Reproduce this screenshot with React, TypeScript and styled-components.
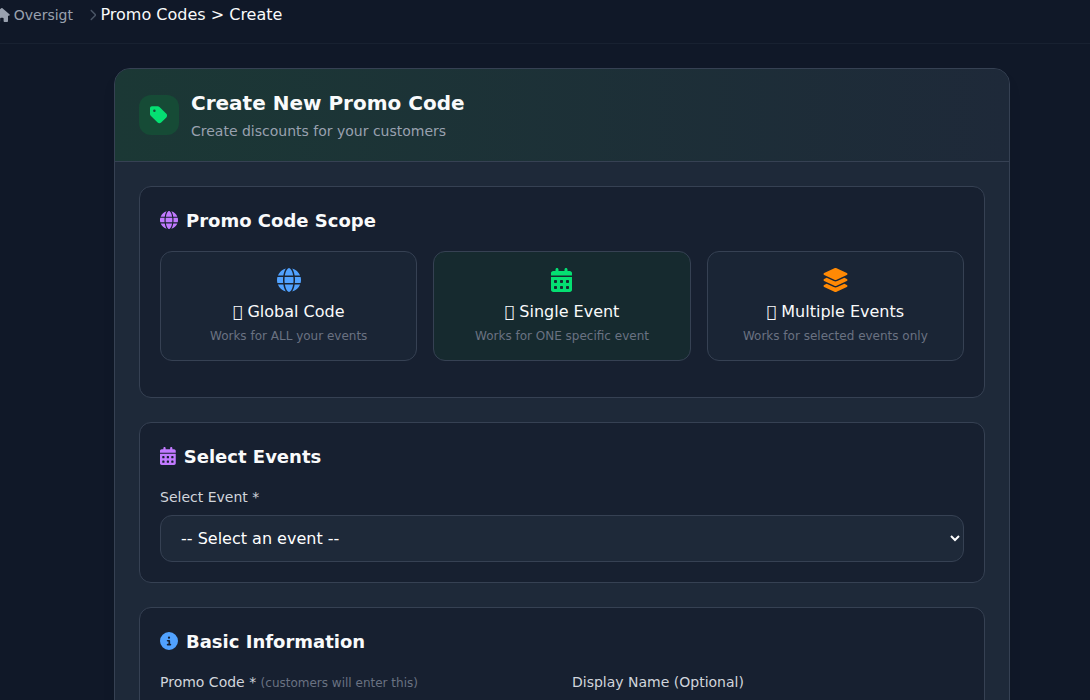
import React from "react";
import styled, { createGlobalStyle } from "styled-components";
import {
  FaCalendarDays,
  FaChevronRight,
  FaCircleInfo,
  FaGlobe,
  FaHouse,
  FaLayerGroup,
  FaTag,
} from "react-icons/fa6";

const GlobalStyle = createGlobalStyle`
  *, *::before, *::after { box-sizing: border-box; }
  body {
    margin: 0;
    background: #101828;
    color: #f9fafb;
    font-family: "DejaVu Sans", sans-serif;
    font-size: 16px;
    line-height: 24px;
    overflow-x: hidden;
  }
  h1, h2, p, fieldset { margin: 0; padding: 0; border: 0; }

  /* Icons share one height; their width follows the shape of the drawing. */
  svg { display: block; flex-shrink: 0; height: 1em; }
  svg[viewBox="0 0 320 512"] { width: 0.625em; }
  svg[viewBox="0 0 448 512"] { width: 0.875em; }
  svg[viewBox="0 0 576 512"] { width: 1.125em; }
`;

const Page = styled.div`
  min-height: 100vh;
`;

const TopBar = styled.header`
  height: 44px;
  padding-top: 3px;
  border-bottom: 1px solid #182131;
  border-top-left-radius: 8px;
`;

const Breadcrumb = styled.nav`
  display: flex;
  align-items: center;
  gap: 4px;
  margin-left: -6px;
`;

const CrumbLink = styled.a`
  display: flex;
  align-items: center;
  gap: 4px;
  margin-right: 12px;
  color: #99a1af;
  font-size: 14px;
  text-decoration: none;
`;

const CrumbDivider = styled(FaChevronRight)`
  color: #4a5565;
  font-size: 12px;
`;

const Main = styled.main`
  padding: 24px 24px 24px 58px;
`;

const Card = styled.section`
  max-width: 896px;
  margin: 0 auto;
  overflow: hidden;
  background: #1e2939;
  border: 1px solid #364153;
  border-radius: 16px;
  box-shadow: 0 10px 15px -3px rgba(0, 0, 0, 0.1);
`;

const CardHeader = styled.div`
  display: flex;
  align-items: center;
  gap: 12px;
  padding: 20px 24px;
  border-bottom: 1px solid #364153;
  background: linear-gradient(90deg, #1b3835 0%, #1e2939 100%);
`;

const IconTile = styled.div`
  display: grid;
  place-items: center;
  width: 40px;
  height: 40px;
  border-radius: 12px;
  background: #164b36;
  color: #05df72;
  font-size: 20px;
`;

const Title = styled.h1`
  font-size: 20px;
  line-height: 28px;
`;

const Subtitle = styled.p`
  margin-top: 4px;
  color: #99a1af;
  font-size: 14px;
  line-height: 20px;
`;

const Form = styled.form`
  display: grid;
  gap: 24px;
  padding: 24px;
`;

const Panel = styled.section`
  padding: 20px;
  background: #172030;
  border: 1px solid #364153;
  border-radius: 12px;
`;

const PanelTitle = styled.h2<{ $tint: string }>`
  margin-bottom: 16px;
  font-size: 18px;
  line-height: 28px;

  svg {
    display: inline-block;
    margin-right: 8px;
    vertical-align: -2px;
    color: ${(p) => p.$tint};
  }
`;

const Options = styled.fieldset`
  display: grid;
  grid-template-columns: repeat(3, minmax(0, 1fr));
  gap: 16px;
  margin-bottom: 16px;
`;

const Option = styled.label<{ $tint: string }>`
  position: relative;
  display: flex;
  flex-direction: column;
  align-items: center;
  padding: 16px;
  border: 1px solid #364153;
  border-radius: 12px;
  background: #1a2535;
  text-align: center;
  cursor: pointer;

  svg {
    margin-bottom: 8px;
    color: ${(p) => p.$tint};
    font-size: 24px;
  }

  &:has(input:checked) { background: #162a2f; }
`;

const HiddenRadio = styled.input`
  position: absolute;
  opacity: 0;
  pointer-events: none;
`;

const OptionText = styled.span`
  margin-top: 4px;
  color: #6a7282;
  font-size: 12px;
  line-height: 16px;
`;

const Fields = styled.div`
  display: grid;
  grid-template-columns: repeat(2, minmax(0, 1fr));
  gap: 20px;
`;

const Label = styled.label`
  display: block;
  margin-bottom: 8px;
  color: #d1d5dc;
  font-size: 14px;
  line-height: 20px;
`;

const Hint = styled.span`
  color: #6a7282;
  font-size: 12px;
`;

const Select = styled.select`
  display: block;
  width: 100%;
  padding: 12px 0 12px 16px;
  border: 1px solid #364153;
  border-radius: 12px;
  background: #1e2939;
  color: #ffffff;
  font: inherit;
`;

const Input = styled.input`
  display: block;
  width: 100%;
  padding: 12px 16px;
  border: 1px solid #364153;
  border-radius: 12px;
  background: #1e2939;
  color: #ffffff;
  font: inherit;
`;

const scopes = [
  { id: "global", icon: <FaGlobe />, tint: "#51a2ff", name: "\u{F0000} Global Code", text: "Works for ALL your events" },
  { id: "single", icon: <FaCalendarDays />, tint: "#05df72", name: "\u{F0000} Single Event", text: "Works for ONE specific event" },
  { id: "multiple", icon: <FaLayerGroup />, tint: "#ff8904", name: "\u{F0000} Multiple Events", text: "Works for selected events only" },
];

export default function App() {
  return (
    <Page>
      <GlobalStyle />
      <TopBar>
        <Breadcrumb aria-label="Breadcrumb">
          <CrumbLink href="#">
            <FaHouse />
            Oversigt
          </CrumbLink>
          <CrumbDivider />
          <span>Promo Codes &gt; Create</span>
        </Breadcrumb>
      </TopBar>
      <Main>
        <Card>
          <CardHeader>
            <IconTile>
              <FaTag />
            </IconTile>
            <div>
              <Title>Create New Promo Code</Title>
              <Subtitle>Create discounts for your customers</Subtitle>
            </div>
          </CardHeader>
          <Form>
            <Panel>
              <PanelTitle $tint="#c27aff">
                <FaGlobe />
                Promo Code Scope
              </PanelTitle>
              <Options aria-label="Promo Code Scope">
                {scopes.map((s) => (
                  <Option key={s.id} $tint={s.tint}>
                    <HiddenRadio type="radio" name="scope" value={s.id} defaultChecked={s.id === "single"} />
                    {s.icon}
                    <span>{s.name}</span>
                    <OptionText>{s.text}</OptionText>
                  </Option>
                ))}
              </Options>
            </Panel>
            <Panel>
              <PanelTitle $tint="#c27aff">
                <FaCalendarDays />
                Select Events
              </PanelTitle>
              <Label htmlFor="event">Select Event *</Label>
              <Select id="event">
                <option>-- Select an event --</option>
              </Select>
            </Panel>
            <Panel>
              <PanelTitle $tint="#51a2ff">
                <FaCircleInfo />
                Basic Information
              </PanelTitle>
              <Fields>
                <div>
                  <Label htmlFor="code">
                    Promo Code * <Hint>(customers will enter this)</Hint>
                  </Label>
                  <Input id="code" />
                </div>
                <div>
                  <Label htmlFor="display-name">Display Name (Optional)</Label>
                  <Input id="display-name" />
                </div>
              </Fields>
            </Panel>
          </Form>
        </Card>
      </Main>
    </Page>
  );
}
